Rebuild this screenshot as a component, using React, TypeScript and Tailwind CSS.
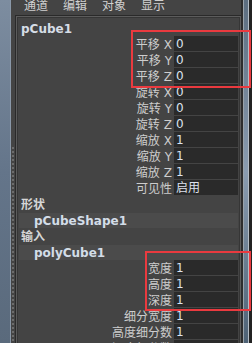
import React from "react";

const font = "font-['DejaVu_Sans','Noto_Sans_CJK_SC',sans-serif]";

type RowProps = { label: string; axis?: string; value: string };

function Row({ label, axis, value }: RowProps) {
  return (
    <div className="flex h-[16px] shrink-0">
      <div className="flex-1 text-right pr-[2px] text-[12px] leading-[18px] text-[#cdcdcd] whitespace-nowrap">
        {label}
        {axis && <span className="ml-[4px]">{axis}</span>}
      </div>
      <div className="w-[64px] h-[15px] bg-[#2a2a2a] pl-[2px] text-[12px] leading-[17px] text-[#dde2ee]">
        {value}
      </div>
    </div>
  );
}

function Section({ title }: { title: string }) {
  return (
    <div className="h-[17px] shrink-0 pl-[3px] text-[12px] leading-[18px] font-bold text-[#d6d6d6]">
      {title}
    </div>
  );
}

function Node({ name }: { name: string }) {
  return (
    <div className="h-[15px] shrink-0 ml-[1px] bg-[#4b4b4b] pl-[15px] text-[12px] leading-[16px] font-bold text-[#d3dde8]">
      {name}
    </div>
  );
}

const transform: RowProps[] = [
  { label: "平移", axis: "X", value: "0" },
  { label: "平移", axis: "Y", value: "0" },
  { label: "平移", axis: "Z", value: "0" },
  { label: "旋转", axis: "X", value: "0" },
  { label: "旋转", axis: "Y", value: "0" },
  { label: "旋转", axis: "Z", value: "0" },
  { label: "缩放", axis: "X", value: "1" },
  { label: "缩放", axis: "Y", value: "1" },
  { label: "缩放", axis: "Z", value: "1" },
  { label: "可见性", value: "启用" },
];

const poly: RowProps[] = [
  { label: "宽度", value: "1" },
  { label: "高度", value: "1" },
  { label: "深度", value: "1" },
  { label: "细分宽度", value: "1" },
  { label: "高度细分数", value: "1" },
  { label: "深度细分数", value: "1" },
];

export default function App() {
  return (
    <div className={`relative w-[252px] h-[343px] overflow-hidden flex bg-[#444444] ${font}`}>
      {/* viewport edge */}
      <div className="w-[11px] h-full bg-gradient-to-b from-[#7d8da0] via-[#64758a] to-[#5a6a7c] border-r border-[#8a98a8]" />

      <div className="w-[230px] h-full flex flex-col">
        {/* menu bar */}
        <div className="h-[15px] shrink-0 flex gap-[15px] pl-[13px] text-[12px] leading-[13px] text-[#d0d0d0]">
          <span>通道</span>
          <span>编辑</span>
          <span>对象</span>
          <span>显示</span>
        </div>

        <div className="flex-1 min-h-0 flex overflow-hidden">
          {/* grip */}
          <div className="w-[4px] flex flex-col items-center gap-[2px] pt-[132px] overflow-hidden">
            {[...Array(50)].map((_, i) => (
              <div key={i} className="w-[2px] h-[2px] shrink-0 bg-[#6c6c6c]" />
            ))}
          </div>

          {/* panel frame */}
          <div className="flex-1 border-t border-l border-[#2a2a2a]">
            <div className="h-full border-t border-l border-r border-[#5c5c5c]">
              <div className="h-full flex flex-col border-t border-l border-r border-[#363636] pr-[1px] overflow-hidden">
                <div className="h-[18px] shrink-0 pl-[3px] pt-[4px] text-[12px] leading-[14px] font-bold text-[#d6dde6]">
                  pCube1
                </div>
                {transform.map((r, i) => (
                  <Row key={i} {...r} />
                ))}
                <Section title="形状" />
                <Node name="pCubeShape1" />
                <Section title="输入" />
                <Node name="polyCube1" />
                {poly.map((r, i) => (
                  <Row key={i} {...r} />
                ))}
              </div>
            </div>
          </div>
        </div>
      </div>

      {/* right scroll edge */}
      <div className="flex-1 flex h-full">
        <div className="w-[2px] bg-[#2d2d2d]" />
        <div className="w-[1px] bg-[#9aa3aa]" />
        <div className="w-[4px] bg-gradient-to-b from-[#5c6e80] via-[#8a9cb0] to-[#4e6275]" />
        <div className="w-[1px] bg-[#b4bcc4]" />
        <div className="flex-1 bg-[#232323]" />
      </div>

      {/* annotation boxes */}
      <div className="absolute left-[131px] top-[30px] w-[120px] h-[58px] border-2 border-[#ea3a3f]" />
      <div className="absolute left-[145px] top-[251px] w-[106px] h-[60px] border-2 border-[#ea3a3f]" />
    </div>
  );
}
